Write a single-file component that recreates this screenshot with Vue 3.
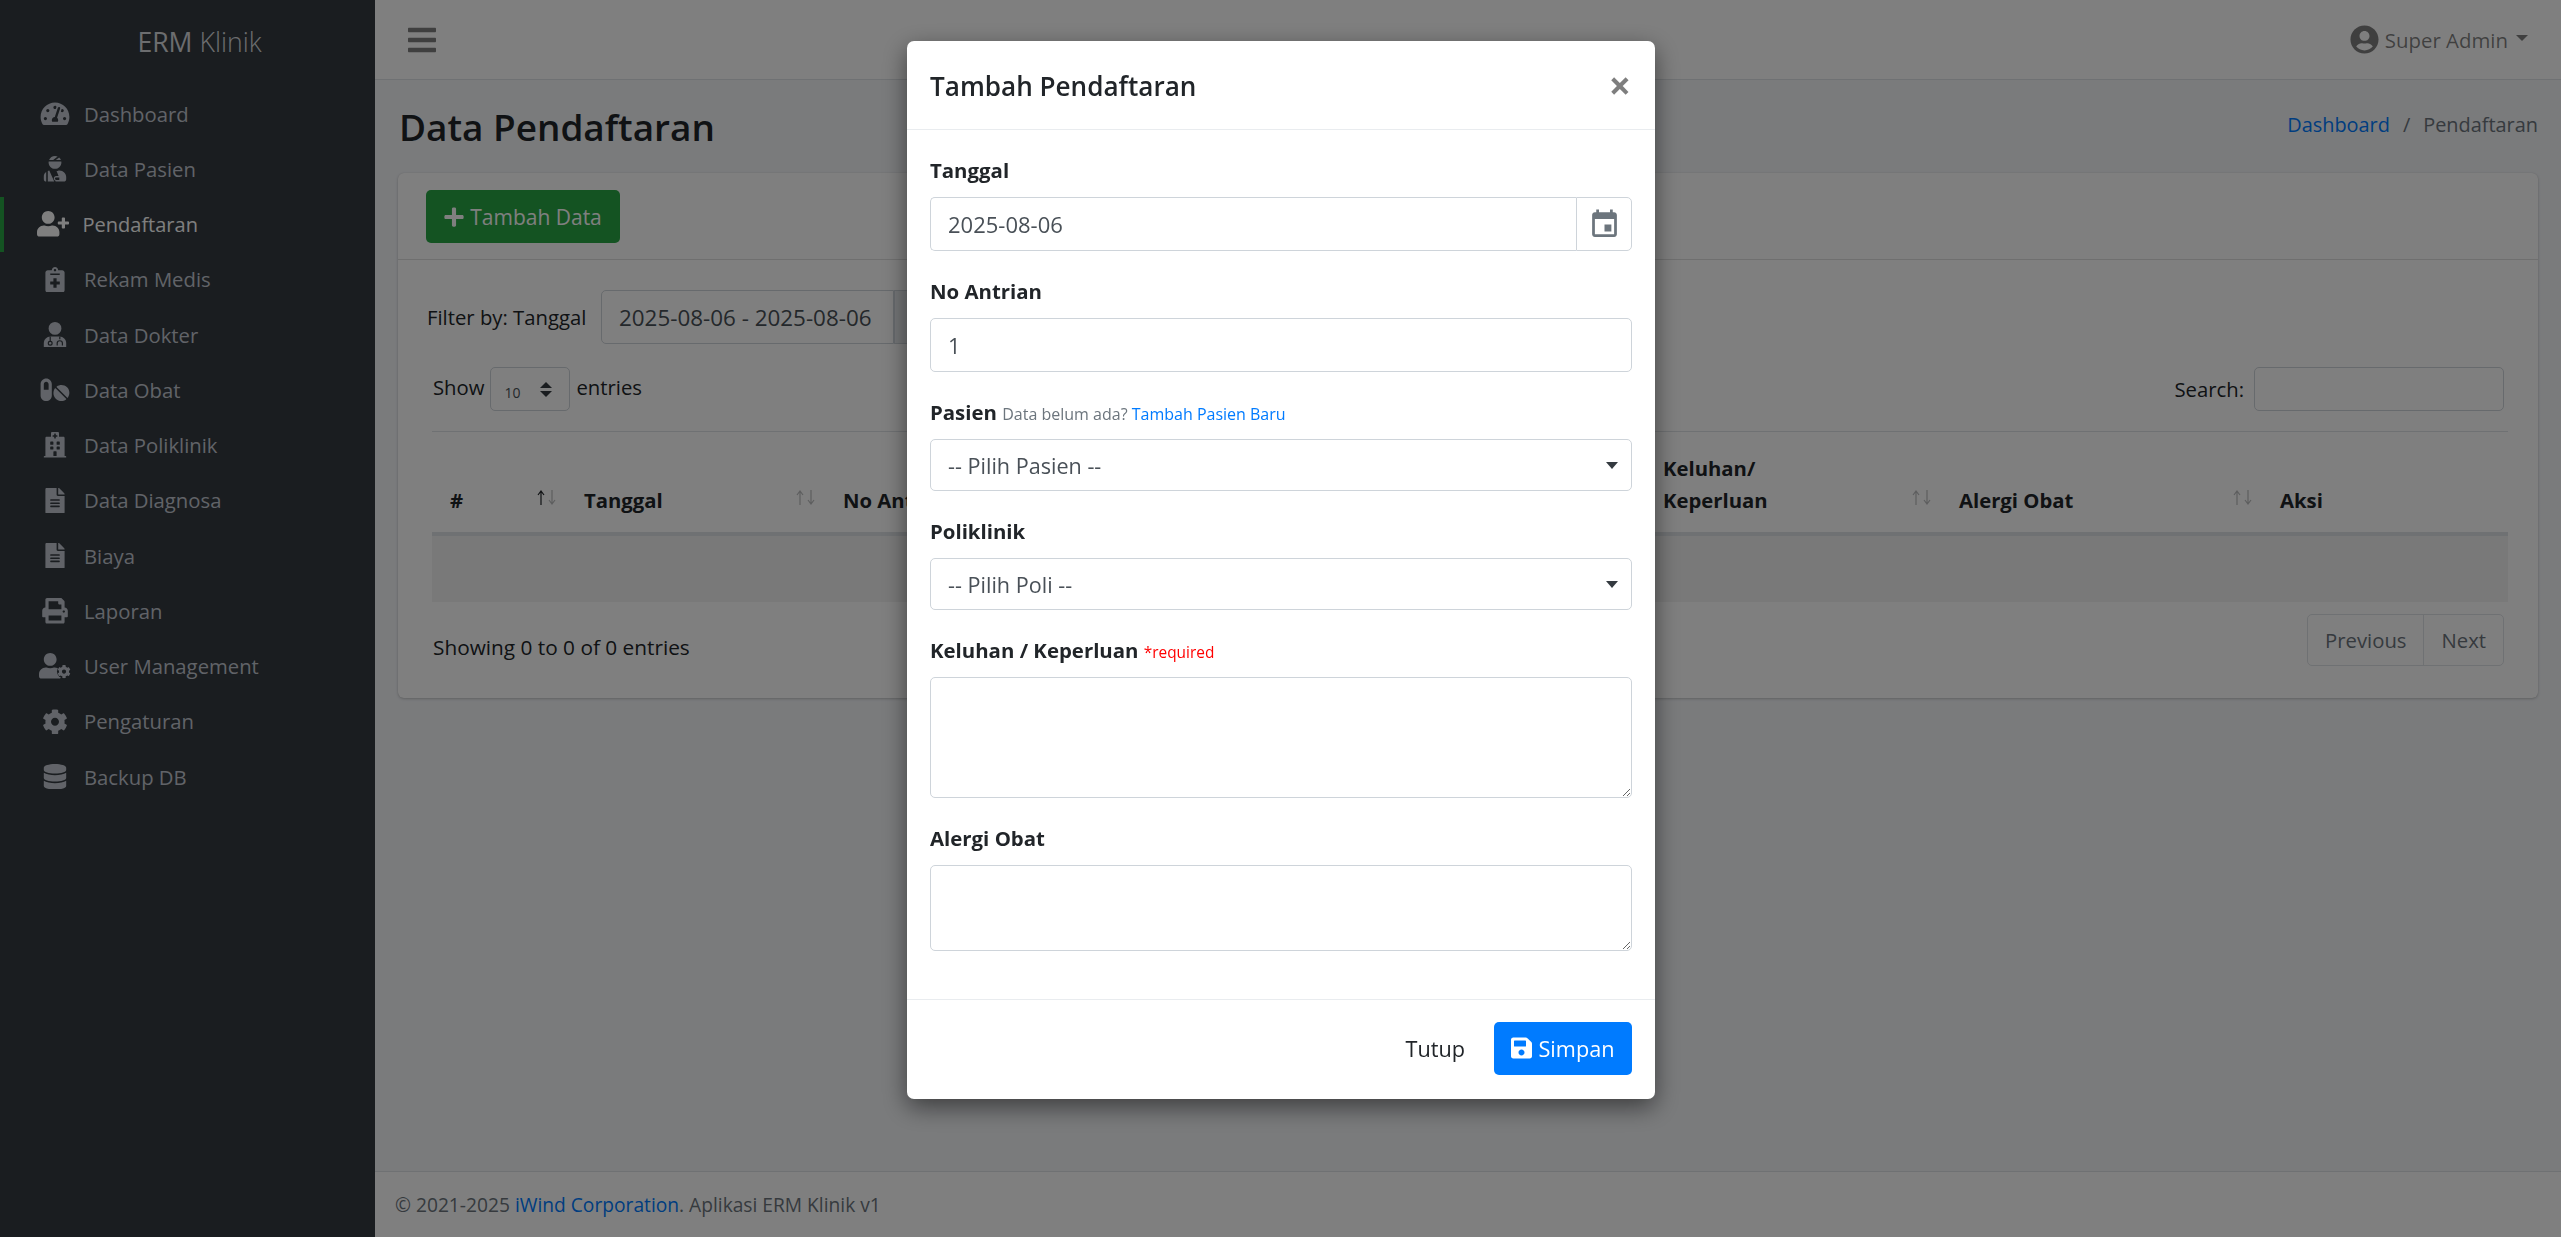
<script setup>
const cog = 'M487.4 315.7l-42.6-24.6c4.3-23.2 4.3-47 0-70.2l42.6-24.6c4.9-2.8 7.1-8.6 5.5-14-11.1-35.6-30-67.8-54.7-94.6-3.8-4.1-10-5.1-14.8-2.3L380.8 110c-17.9-15.4-38.5-27.3-60.8-35.1V25.8c0-5.6-3.9-10.5-9.4-11.7-36.7-8.2-74.3-7.8-109.2 0-5.5 1.2-9.4 6.1-9.4 11.7V75c-22.2 7.9-42.8 19.8-60.8 35.1L88.7 85.5c-4.9-2.8-11-1.9-14.8 2.3-24.7 26.7-43.6 58.9-54.7 94.6-1.7 5.4.6 11.2 5.5 14L67.3 221c-4.3 23.2-4.3 47 0 70.2l-42.6 24.6c-4.9 2.8-7.1 8.6-5.5 14 11.1 35.6 30 67.8 54.7 94.6 3.8 4.1 10 5.1 14.8 2.3l42.6-24.6c17.9 15.4 38.5 27.3 60.8 35.1v49.2c0 5.6 3.9 10.5 9.4 11.7 36.7 8.2 74.3 7.8 109.2 0 5.5-1.2 9.4-6.1 9.4-11.7v-49.2c22.2-7.9 42.8-19.8 60.8-35.1l42.6 24.6c4.9 2.8 11 1.9 14.8-2.3 24.7-26.7 43.6-58.9 54.7-94.6 1.5-5.5-.7-11.3-5.6-14.1zM256 336c-44.1 0-80-35.9-80-80s35.9-80 80-80 80 35.9 80 80-35.9 80-80 80z'
const fileAlt = 'M224 136V0H24C10.7 0 0 10.7 0 24v464c0 13.3 10.7 24 24 24h336c13.3 0 24-10.7 24-24V160H248c-13.2 0-24-10.8-24-24zm64 236c0 6.6-5.4 12-12 12H108c-6.6 0-12-5.4-12-12v-8c0-6.6 5.4-12 12-12h168c6.6 0 12 5.4 12 12v8zm0-64c0 6.6-5.4 12-12 12H108c-6.6 0-12-5.4-12-12v-8c0-6.6 5.4-12 12-12h168c6.6 0 12 5.4 12 12v8zm0-72v8c0 6.6-5.4 12-12 12H108c-6.6 0-12-5.4-12-12v-8c0-6.6 5.4-12 12-12h168c6.6 0 12 5.4 12 12zm96-114.1v6.1H256V0h6.1c6.4 0 12.5 2.5 17 7l97.9 98c4.5 4.5 7 10.6 7 16.9z'

const menu = [
  { label: 'Dashboard', box: '0 0 576 512', d: 'M288 32C128.94 32 0 160.94 0 320c0 52.8 14.25 102.26 39.06 144.8 5.61 9.62 16.3 15.2 27.44 15.2h443c11.14 0 21.83-5.58 27.44-15.2C561.75 422.26 576 372.8 576 320c0-159.06-128.94-288-288-288zm0 64c14.71 0 26.58 10.13 30.32 23.65-1.11 2.26-2.64 4.23-3.45 6.67l-9.22 27.67c-5.13 3.49-10.97 6.01-17.64 6.01-17.67 0-32-14.33-32-32S270.33 96 288 96zM96 384c-17.67 0-32-14.33-32-32s14.33-32 32-32 32 14.33 32 32-14.33 32-32 32zm48-160c-17.67 0-32-14.33-32-32s14.33-32 32-32 32 14.33 32 32-14.33 32-32 32zm246.77-72.41l-61.33 184C343.13 347.33 352 364.54 352 384c0 11.72-3.38 22.55-8.88 32H232.88c-5.5-9.45-8.88-20.28-8.88-32 0-33.94 26.5-61.43 59.9-63.59l61.34-184.01c4.17-12.56 17.73-19.45 30.36-15.17 12.57 4.19 19.35 17.79 15.17 30.36zm14.66 57.2l15.52-46.55c3.47-1.29 7.13-2.23 11.05-2.23 17.67 0 32 14.33 32 32s-14.33 32-32 32c-11.38-.01-20.89-6.28-26.57-15.22zM480 384c-17.67 0-32-14.33-32-32s14.33-32 32-32 32 14.33 32 32-14.33 32-32 32z' },
  { label: 'Data Pasien', box: '0 0 448 512', kind: 'injured' },
  { label: 'Pendaftaran', box: '0 0 640 512', active: true, d: 'M624 208h-64v-64c0-8.8-7.2-16-16-16h-32c-8.8 0-16 7.2-16 16v64h-64c-8.8 0-16 7.2-16 16v32c0 8.8 7.2 16 16 16h64v64c0 8.8 7.2 16 16 16h32c8.8 0 16-7.2 16-16v-64h64c8.8 0 16-7.2 16-16v-32c0-8.8-7.2-16-16-16zm-400 48c70.7 0 128-57.3 128-128S294.7 0 224 0 96 57.3 96 128s57.3 128 128 128zm89.6 32h-16.7c-22.2 10.2-46.9 16-72.9 16s-50.6-5.8-72.9-16h-16.7C60.2 288 0 348.2 0 422.4V464c0 26.5 21.5 48 48 48h352c26.5 0 48-21.5 48-48v-41.6c0-74.2-60.2-134.4-134.4-134.4z' },
  { label: 'Rekam Medis', box: '0 0 384 512', d: 'M336 64h-80c0-35.3-28.7-64-64-64s-64 28.7-64 64H48C21.5 64 0 85.5 0 112v352c0 26.5 21.5 48 48 48h288c26.5 0 48-21.5 48-48V112c0-26.5-21.5-48-48-48zM192 40c13.3 0 24 10.7 24 24s-10.7 24-24 24-24-10.7-24-24 10.7-24 24-24zm96 304c0 4.4-3.6 8-8 8h-56v56c0 4.4-3.6 8-8 8h-48c-4.4 0-8-3.6-8-8v-56h-56c-4.4 0-8-3.6-8-8v-48c0-4.4 3.6-8 8-8h56v-56c0-4.4 3.6-8 8-8h48c4.4 0 8 3.6 8 8v56h56c4.4 0 8 3.6 8 8v48zm0-192c0 4.4-3.6 8-8 8H104c-4.4 0-8-3.6-8-8v-16c0-4.4 3.6-8 8-8h176c4.4 0 8 3.6 8 8v16z' },
  { label: 'Data Dokter', box: '0 0 448 512', kind: 'doctor' },
  { label: 'Data Obat', box: '0 0 576 512', d: 'M112 32C50.1 32 0 82.1 0 144v224c0 61.9 50.1 112 112 112s112-50.1 112-112V144c0-61.9-50.1-112-112-112zm48 224H64V144c0-26.5 21.5-48 48-48s48 21.5 48 48v112zm139.7-29.7c-3.5-3.5-9.4-3.1-12.3.8-45.3 62.5-40.4 150.1 15.9 206.4 56.3 56.3 143.9 61.2 206.4 15.9 4-2.9 4.3-8.8.8-12.3L299.7 226.3zm229.8-19c-56.3-56.3-143.9-61.2-206.4-15.9-4 2.9-4.3 8.8-.8 12.3l210.8 210.8c3.5 3.5 9.4 3.1 12.3-.8 45.3-62.6 40.5-150.1-15.9-206.4z' },
  { label: 'Data Poliklinik', box: '0 0 448 512', d: 'M448 492v20H0v-20c0-6.627 5.373-12 12-12h20V120c0-13.255 10.745-24 24-24h88V24c0-13.255 10.745-24 24-24h112c13.255 0 24 10.745 24 24v72h88c13.255 0 24 10.745 24 24v360h20c6.627 0 12 5.373 12 12zM308 192h-40c-6.627 0-12 5.373-12 12v40c0 6.627 5.373 12 12 12h40c6.627 0 12-5.373 12-12v-40c0-6.627-5.373-12-12-12zm-168 64h40c6.627 0 12-5.373 12-12v-40c0-6.627-5.373-12-12-12h-40c-6.627 0-12 5.373-12 12v40c0 6.627 5.373 12 12 12zm104 128h-40c-6.627 0-12 5.373-12 12v84h64v-84c0-6.627-5.373-12-12-12zm64-96h-40c-6.627 0-12 5.373-12 12v40c0 6.627 5.373 12 12 12h40c6.627 0 12-5.373 12-12v-40c0-6.627-5.373-12-12-12zm-116 12c0-6.627-5.373-12-12-12h-40c-6.627 0-12 5.373-12 12v40c0 6.627 5.373 12 12 12h40c6.627 0 12-5.373 12-12v-40zM182 96h26v26a6 6 0 0 0 6 6h20a6 6 0 0 0 6-6V96h26a6 6 0 0 0 6-6V70a6 6 0 0 0-6-6h-26V38a6 6 0 0 0-6-6h-20a6 6 0 0 0-6 6v26h-26a6 6 0 0 0-6 6v20a6 6 0 0 0 6 6z' },
  { label: 'Data Diagnosa', box: '0 0 384 512', d: fileAlt },
  { label: 'Biaya', box: '0 0 384 512', d: fileAlt },
  { label: 'Laporan', box: '0 0 512 512', d: 'M448 192V77.25c0-8.49-3.37-16.62-9.37-22.63L393.37 9.37c-6-6-14.14-9.37-22.63-9.37H96C78.33 0 64 14.33 64 32v160c-35.35 0-64 28.65-64 64v112c0 8.84 7.16 16 16 16h48v96c0 17.67 14.33 32 32 32h320c17.67 0 32-14.33 32-32v-96h48c8.84 0 16-7.16 16-16V256c0-35.35-28.65-64-64-64zm-64 256H128v-96h256v96zm0-224H128V64h192v48c0 8.84 7.16 16 16 16h48v96zm48 72c-13.25 0-24-10.75-24-24 0-13.26 10.75-24 24-24s24 10.74 24 24c0 13.25-10.75 24-24 24z' },
  { label: 'User Management', box: '0 0 640 512', kind: 'usercog' },
  { label: 'Pengaturan', box: '0 0 512 512', d: cog },
  { label: 'Backup DB', box: '0 0 448 512', d: 'M448 73.143v45.714C448 159.143 347.667 192 224 192S0 159.143 0 118.857V73.143C0 32.857 100.333 0 224 0s224 32.857 224 73.143zM448 176v102.857C448 319.143 347.667 352 224 352S0 319.143 0 278.857V176c48.125 33.143 136.208 48.572 224 48.572S399.874 209.143 448 176zm0 160v102.857C448 479.143 347.667 512 224 512S0 479.143 0 438.857V336c48.125 33.143 136.208 48.572 224 48.572S399.874 369.143 448 336z' }
]

const columns = [
  { title: '#', cls: 'c-no', first: true },
  { title: 'Tanggal', cls: 'c-tgl' },
  { title: 'No Antrian', cls: 'c-ant' },
  { title: 'Pasien', cls: 'c-pas' },
  { title: 'Poliklinik', cls: 'c-pol' },
  { title: 'Keluhan/ Keperluan', cls: 'c-kel' },
  { title: 'Alergi Obat', cls: 'c-alg' },
  { title: 'Aksi', cls: 'c-aksi', plain: true }
]
</script>

<template>
  <div class="page">
    <aside class="sidebar">
      <div class="brand"><span class="brand-bold">ERM</span> <span class="brand-light">Klinik</span></div>
      <nav class="menu">
        <a v-for="m in menu" :key="m.label" class="menu-item" :class="{ active: m.active }">
          <span class="menu-icon">
            <svg :viewBox="m.box" class="mi">
              <path v-if="m.d" :d="m.d" />
              <g v-else-if="m.kind === 'injured'">
                <path d="M277.37 11.98C261.08 4.47 243.11 0 224 0c-53.69 0-99.5 33.13-118.51 80h81.19l90.69-68.02zM342.51 80c-7.9-19.47-20.67-36.2-36.49-49.52L239.99 80h102.52zM224 256c70.69 0 128-57.31 128-128 0-5.48-.95-10.7-1.61-16H97.61c-.67 5.3-1.61 10.52-1.61 16 0 70.69 57.31 128 128 128zM80 299.7V512h128.26l-98.45-221.52A132.835 132.835 0 0 0 80 299.7zM0 464c0 26.51 21.49 48 48 48V320.24C19.64 337.83 0 368.68 0 403.2V464z" />
                <path fill-rule="evenodd" d="M313.6 288h-16.7c-13 6-27 10.4-42 13.5L296 400h-48c-26.5 0-48 21.5-48 48 0 20 12 36 28 44l9 20h163c26.5 0 48-21.5 48-48v-41.6C448 348.2 387.8 288 313.6 288zM248 432h62v48h-62c-13 0-24-11-24-24s11-24 24-24z" />
              </g>
              <g v-else-if="m.kind === 'doctor'">
                <circle cx="224" cy="128" r="128" />
                <path d="M0 512V422c0-74 60-134 134-134h180c74 0 134 60 134 134v90z" />
                <circle class="cut" cx="128" cy="424" r="38" />
                <path class="cut" d="M128 390V290M320 290v56M268 472v-50c0-62 104-62 104 0v50" />
              </g>
              <g v-else-if="m.kind === 'usercog'">
                <path d="M224 256c70.7 0 128-57.3 128-128S294.7 0 224 0 96 57.3 96 128s57.3 128 128 128zM313.6 288h-16.7c-22.2 10.2-46.9 16-72.9 16s-50.6-5.8-72.9-16h-16.7C60.2 288 0 348.2 0 422.4V464c0 26.5 21.5 48 48 48h352c26.5 0 48-21.5 48-48v-41.6c0-74.2-60.2-134.4-134.4-134.4z" />
                <circle class="ring" cx="500" cy="372" r="140" />
                <path transform="translate(366 238) scale(.525)" :d="cog" />
              </g>
            </svg>
          </span>
          <span>{{ m.label }}</span>
        </a>
      </nav>
    </aside>

    <div class="main">
      <header class="navbar">
        <svg class="bars" viewBox="0 0 448 512"><path d="M16 132h416c8.837 0 16-7.163 16-16V76c0-8.837-7.163-16-16-16H16C7.163 60 0 67.163 0 76v40c0 8.837 7.163 16 16 16zm0 160h416c8.837 0 16-7.163 16-16v-40c0-8.837-7.163-16-16-16H16c-8.837 0-16 7.163-16 16v40c0 8.837 7.163 16 16 16zm0 160h416c8.837 0 16-7.163 16-16v-40c0-8.837-7.163-16-16-16H16c-8.837 0-16 7.163-16 16v40c0 8.837 7.163 16 16 16z" /></svg>
        <div class="user">
          <svg class="user-icon" viewBox="0 0 496 512"><path d="M248 8C111 8 0 119 0 256s111 248 248 248 248-111 248-248S385 8 248 8zm0 96c48.6 0 88 39.4 88 88s-39.4 88-88 88-88-39.4-88-88 39.4-88 88-88zm0 344c-58.7 0-111.3-26.6-146.5-68.2 18.8-35.4 55.6-59.8 98.5-59.8 2.4 0 4.8.4 7.1 1.1 13 4.2 26.6 6.9 40.9 6.9 14.3 0 28-2.7 40.9-6.9 2.3-.7 4.7-1.1 7.1-1.1 42.9 0 79.7 24.4 98.5 59.8C359.3 421.4 306.7 448 248 448z" /></svg>
          <span>Super Admin</span>
          <i class="caret"></i>
        </div>
      </header>

      <main class="content">
        <div class="content-head">
          <h1>Data Pendaftaran</h1>
          <div class="crumbs"><a>Dashboard</a><span class="sep">/</span><span>Pendaftaran</span></div>
        </div>

        <section class="card">
          <div class="card-head">
            <button class="btn-green">
              <svg class="plus" viewBox="0 0 448 512"><path d="M416 208H272V64c0-17.67-14.33-32-32-32h-32c-17.67 0-32 14.33-32 32v144H32c-17.67 0-32 14.33-32 32v32c0 17.67 14.33 32 32 32h144v144c0 17.67 14.33 32 32 32h32c17.67 0 32-14.33 32-32V304h144c17.67 0 32-14.33 32-32v-32c0-17.67-14.33-32-32-32z" /></svg>
              Tambah Data
            </button>
          </div>
          <div class="card-body">
            <div class="filter">
              <span class="filter-label">Filter by: Tanggal</span>
              <input class="filter-input" value="2025-08-06 - 2025-08-06" />
              <span class="filter-addon"></span>
            </div>

            <div class="dt">
              <div class="dt-top">
                <div class="dt-len">
                  <span class="len-text">Show</span>
                  <span class="len-select">10<i class="updown"></i></span>
                  <span class="len-text">entries</span>
                </div>
                <div class="dt-search">
                  <span>Search:</span>
                  <input class="search-input" />
                </div>
              </div>

              <table class="table">
                <thead>
                  <tr>
                    <th v-for="c in columns" :key="c.title" :class="c.cls">
                      <span class="th-text">{{ c.title }}</span>
                      <span v-if="!c.plain" class="sort">
                        <svg :class="{ on: c.first }" viewBox="0 0 10 15"><path d="M5 15V1M2 5l3-4 3 4" /></svg>
                        <svg viewBox="0 0 10 15"><path d="M5 0v14M2 10l3 4 3-4" /></svg>
                      </span>
                    </th>
                  </tr>
                </thead>
                <tbody>
                  <tr><td colspan="8"></td></tr>
                </tbody>
              </table>

              <div class="dt-bottom">
                <span class="dt-info">Showing 0 to 0 of 0 entries</span>
                <div class="pager"><span>Previous</span><span>Next</span></div>
              </div>
            </div>
          </div>
        </section>
      </main>

      <footer class="footer">© 2021-2025&nbsp;<a>iWind Corporation</a>. Aplikasi ERM Klinik v1</footer>
    </div>

    <div class="backdrop"></div>

    <div class="modal-wrap">
      <div class="modal">
        <div class="modal-head">
          <h4>Tambah Pendaftaran</h4>
          <span class="close">×</span>
        </div>
        <div class="modal-body">
          <div class="group">
            <label>Tanggal</label>
            <div class="date-group">
              <input class="control date-input" value="2025-08-06" />
              <span class="date-addon">
                <svg viewBox="0 0 24 24"><path d="M17 12h-5v5h5v-5zM16 1v2H8V1H6v2H5c-1.11 0-1.99.9-1.99 2L3 19c0 1.1.89 2 2 2h14c1.1 0 2-.9 2-2V5c0-1.1-.9-2-2-2h-1V1h-2zm3 18H5V8h14v11z" /></svg>
              </span>
            </div>
          </div>
          <div class="group">
            <label>No Antrian</label>
            <input class="control" value="1" />
          </div>
          <div class="group">
            <label>Pasien <small class="hint">Data belum ada? <a>Tambah Pasien Baru</a></small></label>
            <div class="select-box">-- Pilih Pasien --<i class="arrow"></i></div>
          </div>
          <div class="group">
            <label>Poliklinik</label>
            <div class="select-box">-- Pilih Poli --<i class="arrow"></i></div>
          </div>
          <div class="group">
            <label>Keluhan / Keperluan <small class="req">*required</small></label>
            <textarea class="control area-lg"></textarea>
          </div>
          <div class="group">
            <label>Alergi Obat</label>
            <textarea class="control area-sm"></textarea>
          </div>
        </div>
        <div class="modal-foot">
          <button class="btn-link">Tutup</button>
          <button class="btn-blue">
            <svg viewBox="0 0 448 512"><path d="M433.941 129.941l-83.882-83.882A48 48 0 0 0 316.118 32H48C21.49 32 0 53.49 0 80v352c0 26.51 21.49 48 48 48h352c26.51 0 48-21.49 48-48V163.882a48 48 0 0 0-14.059-33.941zM224 416c-35.346 0-64-28.654-64-64 0-35.346 28.654-64 64-64s64 28.654 64 64c0 35.346-28.654 64-64 64zm96-304.52V212c0 6.627-5.373 12-12 12H76c-6.627 0-12-5.373-12-12V108c0-6.627 5.373-12 12-12h228.52c3.183 0 6.235 1.264 8.485 3.515l3.48 3.48A11.996 11.996 0 0 1 320 111.48z" /></svg>
            Simpan
          </button>
        </div>
      </div>
    </div>
  </div>
</template>

<style scoped>
.page {
  display: flex;
  min-height: 100vh;
  font-family: "Open Sans", "Noto Sans", sans-serif;
  font-size: 20.3px;
  color: #212529;
  background: #f4f6f9;
}

/* sidebar */
.sidebar {
  width: 375px;
  flex: none;
  background: #343a40;
  color: #c2c7d0;
}
.brand {
  height: 84px;
  display: flex;
  align-items: center;
  justify-content: center;
  gap: 7px;
  padding-left: 24px;
  font-size: 26.6px;
  color: #d8dbde;
}
.brand-bold { font-weight: 400; }
.brand-light { font-weight: 300; }
.menu {
  display: flex;
  flex-direction: column;
  padding-top: 2px;
}
.menu-item {
  height: 55.25px;
  display: flex;
  align-items: center;
  gap: 14px;
}
.menu-icon {
  width: 30px;
  margin-left: 40px;
  height: 28px;
  display: flex;
  align-items: center;
  justify-content: center;
  flex: none;
}
.menu-item.active {
  color: #fff;
  border-left: 4px solid #28a745;
  gap: 14.5px;
  font-size: 20px;
}
.menu-item.active .menu-icon {
  margin-left: 34px;
}
.mi {
  height: 25.6px;
  width: 32px;
  fill: currentColor;
  flex: none;
}
.cut {
  fill: none;
  stroke: #343a40;
  stroke-width: 24;
}
.ring {
  fill: #343a40;
}

/* main column */
.main {
  flex: 1;
  min-width: 0;
  display: flex;
  flex-direction: column;
}
.navbar {
  height: 80px;
  box-sizing: border-box;
  background: #fff;
  border-bottom: 1px solid #dee2e6;
  display: flex;
  align-items: center;
  justify-content: space-between;
  padding: 0 33px 0 33px;
  color: rgba(0, 0, 0, .5);
}
.bars {
  width: 28px;
  height: 32px;
  fill: rgba(0, 0, 0, .5);
}
.user {
  display: flex;
  align-items: center;
  gap: 6px;
  font-size: 20.4px;
}
.user-icon {
  width: 29px;
  height: 29px;
  fill: rgba(0, 0, 0, .5);
}
.caret {
  margin-left: 2px;
  margin-top: -3px;
  border-top: 6px solid rgba(0, 0, 0, .5);
  border-left: 6px solid transparent;
  border-right: 6px solid transparent;
}
.content {
  flex: 1;
  padding: 0 23px 0 23px;
}
.content-head {
  height: 93px;
  display: flex;
  align-items: center;
  justify-content: space-between;
  padding-left: 1px;
}
h1 {
  margin: 0;
  font-size: 36.9px;
  font-weight: 600;
}
.crumbs {
  display: flex;
  color: #6c757d;
  margin-top: -5px;
  font-size: 19.9px;
}
.crumbs a { color: #007bff; }
.sep { margin: 0 13px; }

.card {
  background: #fff;
  border-radius: 6px;
  box-shadow: 0 0 1px rgba(0, 0, 0, .125), 0 1px 3px rgba(0, 0, 0, .2);
}
.card-head {
  padding: 17px 28px 16px;
  border-bottom: 1px solid rgba(0, 0, 0, .125);
}
.btn-green {
  height: 53px;
  width: 194px;
  background: #28a745;
  color: #fff;
  border: none;
  border-radius: 5px;
  font: inherit;
  font-size: 21px;
  display: flex;
  align-items: center;
  justify-content: center;
  gap: 6px;
}
.plus {
  width: 20px;
  height: 22px;
  fill: #fff;
}
.card-body {
  padding: 30px 30px 32px 28px;
}
.filter {
  display: flex;
  align-items: center;
  height: 54px;
}
.filter-label {
  margin-left: 1px;
  width: 174px;
  flex: none;
}
.filter-input {
  width: 293px;
  height: 54px;
  box-sizing: border-box;
  border: 1px solid #ced4da;
  border-radius: 5px 0 0 5px;
  padding: 0 17px;
  font: inherit;
  font-size: 22.4px;
  color: #495057;
  background: #fff;
}
.filter-addon {
  width: 60px;
  height: 54px;
  box-sizing: border-box;
  background: #e9ecef;
  border: 1px solid #ced4da;
}
.dt {
  margin: 23px 0 0 6px;
}
.dt-top {
  display: flex;
  justify-content: space-between;
  padding-bottom: 20px;
  padding-right: 4px;
  padding-left: 1px;
  border-bottom: 1px solid #dee2e6;
}
.dt-len, .dt-search {
  display: flex;
  align-items: center;
  gap: 6px;
}
.dt-search { gap: 10px; }
.len-text { padding-bottom: 4px; }
.len-select {
  width: 80px;
  height: 44px;
  box-sizing: border-box;
  border: 1px solid #ced4da;
  border-radius: 5px;
  padding: 6px 0 0 13px;
  font-size: 14px;
  display: flex;
  align-items: center;
  position: relative;
  color: #495057;
  background: #fff;
}
.updown {
  position: absolute;
  right: 17px;
  top: 14px;
  width: 0;
  height: 0;
  border-left: 6px solid transparent;
  border-right: 6px solid transparent;
  border-bottom: 6px solid #343a40;
}
.updown::after {
  content: "";
  position: absolute;
  left: -6px;
  top: 9px;
  border-left: 6px solid transparent;
  border-right: 6px solid transparent;
  border-top: 6px solid #343a40;
}
.search-input {
  width: 250px;
  height: 44px;
  box-sizing: border-box;
  border: 1px solid #ced4da;
  border-radius: 5px;
  background: #fff;
}
.table {
  width: 100%;
  table-layout: fixed;
  border-collapse: separate;
  border-spacing: 0;
}
th {
  height: 104px;
  box-sizing: border-box;
  border-bottom: 4px solid #dee2e6;
  position: relative;
  text-align: left;
  vertical-align: bottom;
  padding: 0 48px 16px 18px;
  line-height: 32px;
  font-weight: 700;
}
.c-no { width: 134px; }
.c-tgl { width: 259px; }
.c-ant { width: 260px; }
.c-pas { width: 280px; }
.c-pol { width: 280px; }
.c-kel { width: 296px; padding-right: 90px; }
.c-alg { width: 321px; }
.sort {
  position: absolute;
  right: 9px;
  bottom: 27px;
  display: flex;
  gap: 1px;
}
.sort svg {
  width: 10px;
  height: 15px;
  fill: none;
  stroke: #212529;
  stroke-width: 1.2;
  opacity: .3;
}
.sort svg.on { opacity: 1; }
td {
  height: 66px;
  padding: 0;
  background: rgba(0, 0, 0, .05);
}
.dt-bottom {
  display: flex;
  justify-content: space-between;
  align-items: center;
  padding: 12px 4px 0 1px;
}
.dt-info {
  font-size: 20.8px;
  padding-top: 14px;
}
.pager {
  display: flex;
  height: 52px;
  box-sizing: border-box;
  border: 1px solid #dee2e6;
  border-radius: 5px;
  color: #6c757d;
  background: #fff;
}
.pager span {
  display: flex;
  align-items: center;
  padding: 0 17px;
}
.pager span + span { border-left: 1px solid #dee2e6; }
.footer {
  height: 66px;
  box-sizing: border-box;
  background: #fff;
  border-top: 1px solid #dee2e6;
  display: flex;
  align-items: center;
  padding-left: 20px;
  color: #6c757d;
  font-size: 19.2px;
}
.footer a { color: #007bff; }

/* modal */
.backdrop {
  position: fixed;
  inset: 0;
  background: rgba(0, 0, 0, .5);
}
.modal-wrap {
  position: fixed;
  inset: 0;
  display: flex;
  justify-content: center;
  align-items: flex-start;
  padding-top: 41px;
}
.modal {
  width: 748px;
  height: 1058px;
  box-sizing: border-box;
  background: #fff;
  border-radius: 7px;
  box-shadow: 0 8px 24px rgba(0, 0, 0, .5);
  display: flex;
  flex-direction: column;
  margin-left: 1px;
}
.modal-head {
  height: 89px;
  box-sizing: border-box;
  border-bottom: 1px solid #e9ecef;
  display: flex;
  justify-content: space-between;
  align-items: center;
  padding: 0 23px;
}
h4 {
  margin: 2px 0 0;
  font-size: 26.1px;
  font-weight: 600;
}
.close {
  font-size: 39px;
  font-weight: 700;
  color: #000;
  opacity: .5;
  line-height: 1;
  margin-top: -2px;
  margin-right: 1px;
}
.modal-body {
  flex: 1;
  padding: 25px 23px 0;
}
.group {
  margin-bottom: 25px;
}
label {
  display: block;
  font-weight: 700;
  font-size: 20.4px;
  line-height: 30px;
  margin-bottom: 12px;
}
.hint {
  font-weight: 400;
  font-size: 16px;
  line-height: 1;
  color: #6c757d;
}
.hint a { color: #007bff; }
.req {
  font-weight: 400;
  font-size: 15.4px;
  line-height: 1;
  color: #ff0000;
}
.control {
  display: block;
  width: 100%;
  height: 54px;
  box-sizing: border-box;
  border: 1px solid #ced4da;
  border-radius: 5px;
  padding: 0 17px;
  font: inherit;
  font-size: 22px;
  color: #495057;
  background: #fff;
  outline: none;
}
.date-group { display: flex; }
.date-input {
  flex: 1;
  border-radius: 5px 0 0 5px;
  border-right: none;
}
.date-addon {
  width: 56px;
  flex: none;
  box-sizing: border-box;
  border: 1px solid #ced4da;
  border-radius: 0 5px 5px 0;
  display: flex;
  align-items: center;
  justify-content: center;
}
.date-addon svg {
  width: 33px;
  height: 33px;
  fill: #6c757d;
}
.select-box {
  height: 52px;
  box-sizing: border-box;
  border: 1px solid #ced4da;
  border-radius: 5px;
  padding: 0 17px;
  display: flex;
  align-items: center;
  justify-content: space-between;
  color: #495057;
  font-size: 21.6px;
}
.arrow {
  margin-right: -4px;
  border-top: 7px solid #343a40;
  border-left: 6px solid transparent;
  border-right: 6px solid transparent;
}
.area-lg { height: 121px; }
.area-sm { height: 86px; }
.modal-foot {
  height: 100px;
  box-sizing: border-box;
  border-top: 1px solid #e9ecef;
  display: flex;
  justify-content: flex-end;
  align-items: center;
  padding: 0 23px 3px;
  gap: 29px;
}
.btn-link {
  border: none;
  background: none;
  padding: 0;
  font: inherit;
  font-size: 21.7px;
  color: #212529;
}
.btn-blue {
  width: 138px;
  height: 53px;
  border: none;
  border-radius: 5px;
  background: #007bff;
  color: #fff;
  font: inherit;
  font-size: 21.7px;
  display: flex;
  align-items: center;
  justify-content: center;
  gap: 6px;
}
.btn-blue svg {
  width: 21px;
  height: 24px;
  fill: #fff;
}
</style>
